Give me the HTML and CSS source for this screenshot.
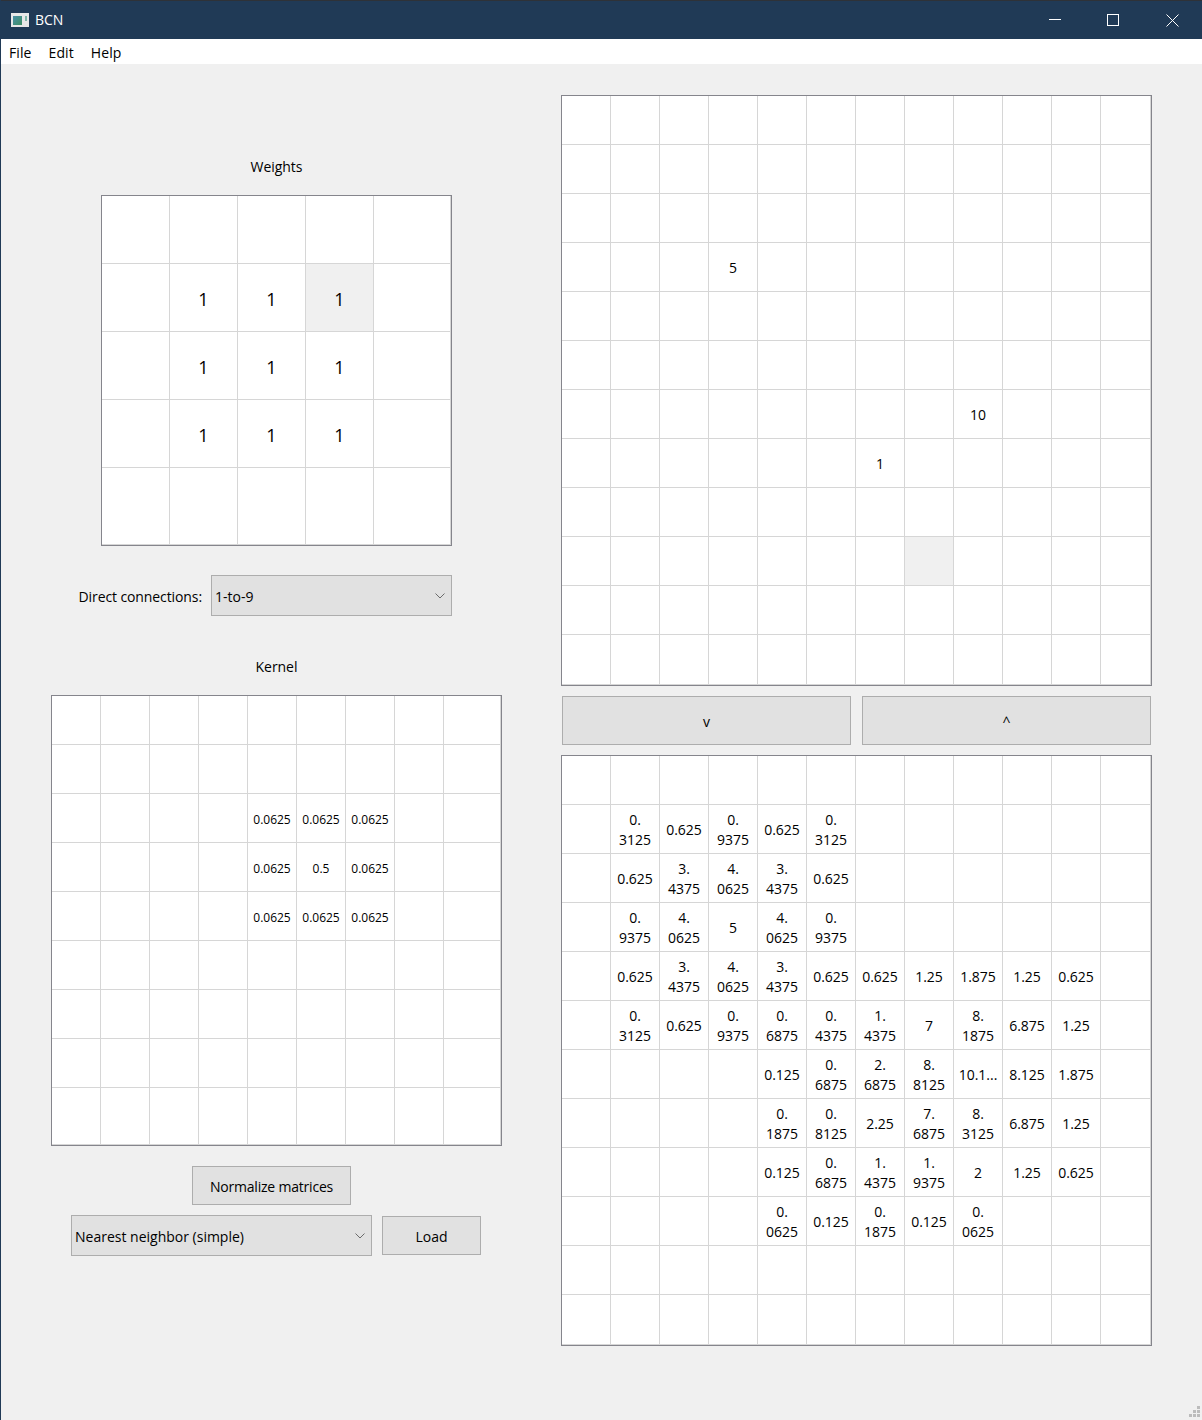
FILE: index.html
```html
<!DOCTYPE html>
<html lang="en">
<head>
<meta charset="utf-8">
<title>BCN</title>
<link rel="stylesheet" href="styles.css">
</head>
<body>
<div class="window">
  <header class="titlebar">
    <svg class="app-icon" width="18" height="14" viewBox="0 0 18 14">
      <defs><linearGradient id="g" x1="0" y1="0" x2="1" y2="1"><stop offset="0" stop-color="#4a90a8"/><stop offset="1" stop-color="#3f8f63"/></linearGradient></defs>
      <rect width="18" height="14" fill="#e8e8e8"/>
      <rect x="2" y="3" width="9" height="9" fill="url(#g)"/>
      <rect x="14" y="3" width="2" height="5" fill="#7fb6a8"/>
    </svg>
    <span class="app-name">BCN</span>
    <div class="caption-buttons">
      <svg width="13" height="13" viewBox="0 0 13 13"><path d="M1 5.5H13" stroke="#fff" fill="none"/></svg>
      <svg width="13" height="13" viewBox="0 0 13 13"><rect x=".5" y=".5" width="11" height="11" stroke="#fff" fill="none"/></svg>
      <svg width="13" height="13" viewBox="0 0 13 13"><path d="M.5 .5L12.5 12.5M12.5 .5L.5 12.5" stroke="#fff" fill="none"/></svg>
    </div>
  </header>
  <nav class="menubar"><span>File</span><span>Edit</span><span>Help</span></nav>
  <main class="content">
    <section class="left">
      <div class="caption first">Weights</div>
      <table class="grid weights">
        <tr><td></td><td></td><td></td><td></td><td></td></tr>
        <tr><td></td><td>1</td><td>1</td><td class="current">1</td><td></td></tr>
        <tr><td></td><td>1</td><td>1</td><td>1</td><td></td></tr>
        <tr><td></td><td>1</td><td>1</td><td>1</td><td></td></tr>
        <tr><td></td><td></td><td></td><td></td><td></td></tr>
      </table>
      <div class="connections">
        <label class="conn-label">Direct connections:</label>
        <div class="combo conn-combo"><span>1-to-9</span><svg class="chev" width="10" height="6" viewBox="0 0 10 6"><path d="M.5 .5L5 5L9.5 .5" stroke="#6b6b6b" fill="none"/></svg></div>
      </div>
      <div class="caption kernel-cap">Kernel</div>
      <table class="grid kernel">
        <tr><td></td><td></td><td></td><td></td><td></td><td></td><td></td><td></td><td></td></tr>
        <tr><td></td><td></td><td></td><td></td><td></td><td></td><td></td><td></td><td></td></tr>
        <tr><td></td><td></td><td></td><td></td><td>0.0625</td><td>0.0625</td><td>0.0625</td><td></td><td></td></tr>
        <tr><td></td><td></td><td></td><td></td><td>0.0625</td><td>0.5</td><td>0.0625</td><td></td><td></td></tr>
        <tr><td></td><td></td><td></td><td></td><td>0.0625</td><td>0.0625</td><td>0.0625</td><td></td><td></td></tr>
        <tr><td></td><td></td><td></td><td></td><td></td><td></td><td></td><td></td><td></td></tr>
        <tr><td></td><td></td><td></td><td></td><td></td><td></td><td></td><td></td><td></td></tr>
        <tr><td></td><td></td><td></td><td></td><td></td><td></td><td></td><td></td><td></td></tr>
        <tr><td></td><td></td><td></td><td></td><td></td><td></td><td></td><td></td><td></td></tr>
      </table>
      <button class="btn normalize">Normalize matrices</button>
      <div class="load-row">
        <div class="combo preset-combo"><span>Nearest neighbor (simple)</span><svg class="chev" width="10" height="6" viewBox="0 0 10 6"><path d="M.5 .5L5 5L9.5 .5" stroke="#6b6b6b" fill="none"/></svg></div>
        <button class="btn load">Load</button>
      </div>
    </section>
    <section class="right">
      <table class="grid board">
        <tr><td></td><td></td><td></td><td></td><td></td><td></td><td></td><td></td><td></td><td></td><td></td><td></td></tr>
        <tr><td></td><td></td><td></td><td></td><td></td><td></td><td></td><td></td><td></td><td></td><td></td><td></td></tr>
        <tr><td></td><td></td><td></td><td></td><td></td><td></td><td></td><td></td><td></td><td></td><td></td><td></td></tr>
        <tr><td></td><td></td><td></td><td>5</td><td></td><td></td><td></td><td></td><td></td><td></td><td></td><td></td></tr>
        <tr><td></td><td></td><td></td><td></td><td></td><td></td><td></td><td></td><td></td><td></td><td></td><td></td></tr>
        <tr><td></td><td></td><td></td><td></td><td></td><td></td><td></td><td></td><td></td><td></td><td></td><td></td></tr>
        <tr><td></td><td></td><td></td><td></td><td></td><td></td><td></td><td></td><td>10</td><td></td><td></td><td></td></tr>
        <tr><td></td><td></td><td></td><td></td><td></td><td></td><td>1</td><td></td><td></td><td></td><td></td><td></td></tr>
        <tr><td></td><td></td><td></td><td></td><td></td><td></td><td></td><td></td><td></td><td></td><td></td><td></td></tr>
        <tr><td></td><td></td><td></td><td></td><td></td><td></td><td></td><td class="current"></td><td></td><td></td><td></td><td></td></tr>
        <tr><td></td><td></td><td></td><td></td><td></td><td></td><td></td><td></td><td></td><td></td><td></td><td></td></tr>
        <tr><td></td><td></td><td></td><td></td><td></td><td></td><td></td><td></td><td></td><td></td><td></td><td></td></tr>
      </table>
      <div class="step-row">
        <button class="btn step">v</button>
        <button class="btn step">^</button>
      </div>
      <table class="grid board result">
        <tr><td></td><td></td><td></td><td></td><td></td><td></td><td></td><td></td><td></td><td></td><td></td><td></td></tr>
        <tr><td></td><td>0.<br>3125</td><td>0.625</td><td>0.<br>9375</td><td>0.625</td><td>0.<br>3125</td><td></td><td></td><td></td><td></td><td></td><td></td></tr>
        <tr><td></td><td>0.625</td><td>3.<br>4375</td><td>4.<br>0625</td><td>3.<br>4375</td><td>0.625</td><td></td><td></td><td></td><td></td><td></td><td></td></tr>
        <tr><td></td><td>0.<br>9375</td><td>4.<br>0625</td><td>5</td><td>4.<br>0625</td><td>0.<br>9375</td><td></td><td></td><td></td><td></td><td></td><td></td></tr>
        <tr><td></td><td>0.625</td><td>3.<br>4375</td><td>4.<br>0625</td><td>3.<br>4375</td><td>0.625</td><td>0.625</td><td>1.25</td><td>1.875</td><td>1.25</td><td>0.625</td><td></td></tr>
        <tr><td></td><td>0.<br>3125</td><td>0.625</td><td>0.<br>9375</td><td>0.<br>6875</td><td>0.<br>4375</td><td>1.<br>4375</td><td>7</td><td>8.<br>1875</td><td>6.875</td><td>1.25</td><td></td></tr>
        <tr><td></td><td></td><td></td><td></td><td>0.125</td><td>0.<br>6875</td><td>2.<br>6875</td><td>8.<br>8125</td><td>10.1...</td><td>8.125</td><td>1.875</td><td></td></tr>
        <tr><td></td><td></td><td></td><td></td><td>0.<br>1875</td><td>0.<br>8125</td><td>2.25</td><td>7.<br>6875</td><td>8.<br>3125</td><td>6.875</td><td>1.25</td><td></td></tr>
        <tr><td></td><td></td><td></td><td></td><td>0.125</td><td>0.<br>6875</td><td>1.<br>4375</td><td>1.<br>9375</td><td>2</td><td>1.25</td><td>0.625</td><td></td></tr>
        <tr><td></td><td></td><td></td><td></td><td>0.<br>0625</td><td>0.125</td><td>0.<br>1875</td><td>0.125</td><td>0.<br>0625</td><td></td><td></td><td></td></tr>
        <tr><td></td><td></td><td></td><td></td><td></td><td></td><td></td><td></td><td></td><td></td><td></td><td></td></tr>
        <tr><td></td><td></td><td></td><td></td><td></td><td></td><td></td><td></td><td></td><td></td><td></td><td></td></tr>
      </table>
    </section>
  </main>
  <svg class="grip" width="11" height="12" viewBox="0 0 11 12" fill="#bcbcbc">
    <rect x="8" y="0" width="3" height="3"/>
    <rect x="4" y="4" width="3" height="3"/><rect x="8" y="4" width="3" height="3"/>
    <rect x="0" y="8" width="3" height="3"/><rect x="4" y="8" width="3" height="3"/><rect x="8" y="8" width="3" height="3"/>
  </svg>
</div>
</body>
</html>
```
FILE: styles.css
```css
* { box-sizing: border-box; }
html, body { margin: 0; padding: 0; }
body {
  font-family: "Open Sans", "Noto Sans", sans-serif;
  font-size: 14px;
  line-height: 20px;
  color: #000;
  background: #f0f0f0;
}
.window {
  position: relative;
  width: 1202px;
  height: 1420px;
  overflow: hidden;
  border-left: 1px solid #203a56;
  display: flex;
  flex-direction: column;
}
.titlebar {
  height: 39px;
  flex: none;
  background: #203a56;
  border-top: 1px solid #2e3238;
  margin-left: -1px;
  display: flex;
  align-items: center;
  color: #fff;
  padding-left: 11px;
}
.app-icon { flex: none; margin-right: 6px; }
.app-name { font-size: 14px; }
.caption-buttons {
  margin-left: auto;
  display: flex;
  gap: 46px;
  padding-right: 23px;
}
.menubar {
  height: 25px;
  flex: none;
  background: #fff;
  display: flex;
  align-items: center;
  gap: 17px;
  padding: 2px 0 0 8px;
  letter-spacing: 0.1px;
}
.content { display: flex; flex: 1; align-items: flex-start; }
.left {
  width: 451px;
  margin-left: 50px;
  display: flex;
  flex-direction: column;
  align-items: center;
}
.right { width: 591px; margin-left: 59px; padding-top: 31px; }
.caption { height: 20px; text-align: center; letter-spacing: -0.05px; }
.caption.first { margin-top: 93px; margin-bottom: 18px; }
.kernel-cap { margin-top: 40px; margin-bottom: 19px; padding-top: 1px; }
.grid {
  table-layout: fixed;
  border-collapse: separate;
  border-spacing: 0;
  border: 1px solid #85858c;
  background: #fff;
}
.grid td {
  padding: 2px 0 0;
  text-align: center;
  vertical-align: middle;
  border-right: 1px solid #d6d6d6;
  border-bottom: 1px solid #d6d6d6;
}
.grid td.current { background: #f0f0f0; }
.weights { width: 351px; height: 351px; font-size: 18px; }
.weights td { width: 68px; height: 68px; }
.weights td:last-child { width: auto; }
.weights tr:last-child td { height: 77px; }
.kernel { width: 451px; height: 451px; font-size: 12px; }
.kernel td { width: 49px; height: 49px; padding-top: 4px; }
.kernel td:last-child { width: auto; }
.kernel tr:last-child td { height: 57px; }
.board { width: 591px; height: 591px; }
.board td { width: 49px; height: 49px; }
.board td:last-child { width: auto; }
.board tr:last-child td { height: 50px; }
.connections {
  align-self: stretch;
  margin-top: 29px;
  padding-right: 50px;
  display: flex;
  justify-content: flex-end;
  align-items: center;
  gap: 9px;
}
.conn-label { padding-top: 2px; letter-spacing: -0.1px; }
.combo {
  display: flex;
  align-items: center;
  justify-content: space-between;
  height: 41px;
  padding: 2px 6px 0 3px;
  background: #e1e1e1;
  border: 1px solid #adadad;
}
.chev { margin-top: -2px; }
.conn-combo { width: 241px; }
.preset-combo { width: 301px; }
.btn {
  font: inherit;
  color: inherit;
  background: #e1e1e1;
  border: 1px solid #adadad;
  border-radius: 0;
  padding: 2px 0 0;
}
.normalize { width: 159px; height: 39px; margin-top: 20px; margin-right: 10px; letter-spacing: -0.2px; }
.load-row { margin-top: 10px; margin-right: 1px; display: flex; align-items: center; gap: 10px; }
.load { width: 99px; height: 39px; }
.step-row { display: flex; gap: 11px; margin: 10px 0 10px; padding-left: 1px; }
.step { width: 289px; height: 49px; }
.grip { position: absolute; right: 2px; bottom: 2px; }
```
